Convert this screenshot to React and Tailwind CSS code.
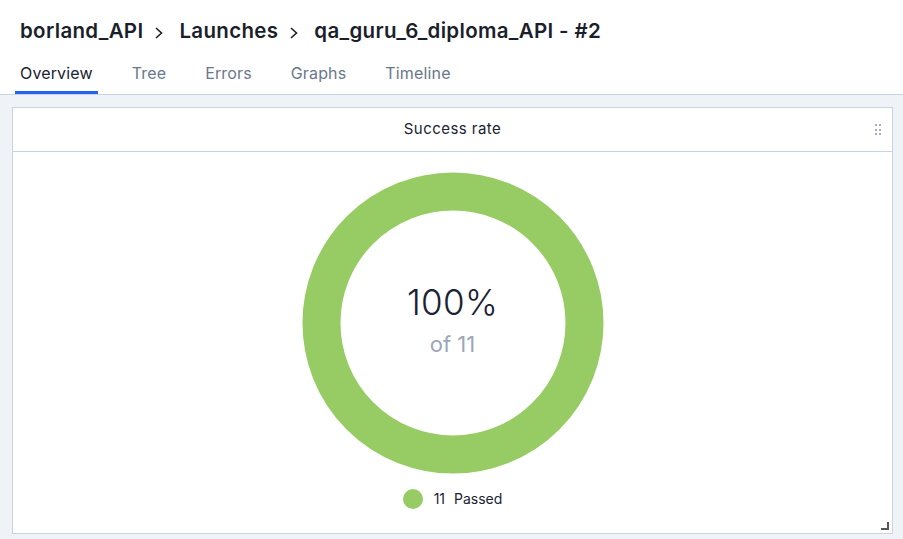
import React from 'react'

const tabs = ['Overview', 'Tree', 'Errors', 'Graphs', 'Timeline']

const Chevron = () => (
    <svg width="12" height="14" viewBox="0 0 12 14" className="ml-[10px] mr-[14px] mt-[2px]">
        <path d="M3 2 L8.5 7 L3 12" fill="none" stroke="#1a1f2b" strokeWidth="1.6" />
    </svg>
)

const Donut = () => (
    <div className="relative w-[302px] h-[302px]">
        <svg width="302" height="302" viewBox="0 0 302 302">
            <circle cx="151" cy="151" r="131.5" fill="none" stroke="#97cc64" strokeWidth="38" />
        </svg>
        <div className="absolute inset-0 flex flex-col items-center justify-center pb-[8px]">
            <div className="text-[35px] leading-[40px] font-light text-[#1a2233] tracking-[0.3px]">100%</div>
            <div className="text-[22px] leading-[26px] text-[#9ba6b9] mt-[9px]">of 11</div>
        </div>
    </div>
)

const App = () => {
    return (
        <div className="w-[903px] h-[539px] bg-[#eff3f8] flex flex-col overflow-hidden" style={{ fontFamily: 'Inter, "Noto Sans", sans-serif' }}>
            {/* Header */}
            <div className="bg-white border-b border-[#c8d2e0]">
                <div className="flex items-center pl-[20px] pt-[16px] h-[47px] text-[20.5px] font-semibold text-[#1a1f2b] tracking-[0.32px]">
                    <span>borland_API</span>
                    <Chevron />
                    <span>Launches</span>
                    <Chevron />
                    <span>qa_guru_6_diploma_API - #2</span>
                </div>
                <div className="flex pl-[15px] mt-[8px] gap-[29px]">
                    {tabs.map((t, i) => (
                        <div
                            key={t}
                            className={`h-[39px] pt-[6px] px-[5px] text-[16px] tracking-[0.15px] ${i === 0 ? 'text-[#1a2233] border-b-[3px] border-[#2563eb]' : 'text-[#6b778c]'}`}
                        >
                            {t}
                        </div>
                    ))}
                </div>
            </div>

            {/* Widget */}
            <div className="pl-[12px] pr-[10px] pt-[12px] pb-[5px] flex-1 flex">
                <div className="flex-1 bg-white border border-[#c8d2e0] flex flex-col relative">
                    <div className="h-[44px] border-b border-[#c8d2e0] flex items-center justify-center relative">
                        <span className="text-[15px] text-[#1a2233] tracking-[0.45px]">Success rate</span>
                        <div className="absolute right-[11px] top-[16px] grid grid-cols-2 gap-x-[2px] gap-y-[2.5px]">
                            {[0, 1, 2, 3, 4, 5].map((k) => (
                                <div key={k} className="w-[2px] h-[2px] bg-[#a3aebf]" />
                            ))}
                        </div>
                    </div>
                    <div className="flex-1 flex flex-col items-center pt-[20px]">
                        <Donut />
                        <div className="flex items-center mt-[14px] text-[14px] text-[#1a2233]">
                            <span className="w-[20px] h-[20px] rounded-full bg-[#97cc64] mr-[11px]" />
                            <span className="mr-[9px]">11</span>
                            <span>Passed</span>
                        </div>
                    </div>
                    <div className="absolute right-[3px] bottom-[3px] w-[8px] h-[8px] border-r-2 border-b-2 border-[#555]" />
                </div>
            </div>
        </div>
    )
}

export default App
